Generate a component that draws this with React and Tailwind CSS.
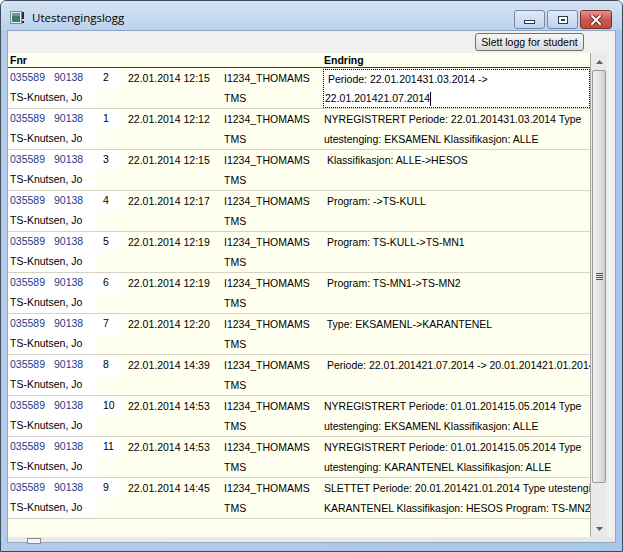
import React from 'react';

const rows = [
  { n: '2', t: '22.01.2014 12:15', e: [' Periode: 22.01.201431.03.2014 ->', '22.01.201421.07.2014'], focus: true },
  { n: '1', t: '22.01.2014 12:12', e: ['NYREGISTRERT Periode: 22.01.201431.03.2014 Type', 'utestenging: EKSAMENL Klassifikasjon: ALLE'] },
  { n: '3', t: '22.01.2014 12:15', e: [' Klassifikasjon: ALLE->HESOS'] },
  { n: '4', t: '22.01.2014 12:17', e: [' Program: ->TS-KULL'] },
  { n: '5', t: '22.01.2014 12:19', e: [' Program: TS-KULL->TS-MN1'] },
  { n: '6', t: '22.01.2014 12:19', e: [' Program: TS-MN1->TS-MN2'] },
  { n: '7', t: '22.01.2014 12:20', e: [' Type: EKSAMENL->KARANTENEL'] },
  { n: '8', t: '22.01.2014 14:39', e: [' Periode: 22.01.201421.07.2014 -> 20.01.201421.01.2014'] },
  { n: '10', t: '22.01.2014 14:53', e: ['NYREGISTRERT Periode: 01.01.201415.05.2014 Type', 'utestenging: EKSAMENL Klassifikasjon: ALLE'] },
  { n: '11', t: '22.01.2014 14:53', e: ['NYREGISTRERT Periode: 01.01.201415.05.2014 Type', 'utestenging: KARANTENEL Klassifikasjon: ALLE'] },
  { n: '9', t: '22.01.2014 14:45', e: ['SLETTET Periode: 20.01.201421.01.2014 Type utestenging:', 'KARANTENEL Klassifikasjon: HESOS Program: TS-MN2'] },
];

function AppIcon() {
  return (
    <svg width="15" height="13" viewBox="0 0 15 13">
      <rect x="0.5" y="0.5" width="11" height="12" fill="#e8eef4" stroke="#7d8a98" />
      <rect x="2" y="2" width="8" height="9" fill="#3f7a6e" />
      <rect x="2" y="2" width="8" height="3" fill="#5fa38c" />
      <rect x="12" y="1" width="2" height="7" fill="#2b2b2b" />
      <rect x="12" y="10" width="2" height="2" fill="#2b2b2b" />
    </svg>
  );
}

function TitleButtons() {
  return (
    <div className="flex items-start gap-[2px] mt-[9px] mr-[10px]">
      <div className="w-[31px] h-[19px] rounded-[3px] border border-[#7189a8] bg-gradient-to-b from-[#e2ebf6] to-[#bfd2ea] flex items-end justify-center pb-[4px]">
        <div className="w-[11px] h-[4px] bg-white border border-[#2e3a4a]" />
      </div>
      <div className="w-[31px] h-[19px] rounded-[3px] border border-[#7189a8] bg-gradient-to-b from-[#e2ebf6] to-[#bfd2ea] flex items-center justify-center">
        <div className="w-[10px] h-[8px] bg-white border border-[#2e3a4a] flex items-center justify-center">
          <div className="w-[4px] h-[2px] bg-[#2e3a4a]" />
        </div>
      </div>
      <div className="w-[32px] h-[19px] rounded-[3px] border border-[#7a2e28] bg-gradient-to-b from-[#e3968f] via-[#c9574e] to-[#c24a40] flex items-center justify-center">
        <svg width="12" height="10" viewBox="0 0 12 10">
          <path d="M2 1 L10 9 M10 1 L2 9" stroke="#5a1a14" strokeWidth="3.6" strokeLinecap="square" />
          <path d="M2 1 L10 9 M10 1 L2 9" stroke="#ffffff" strokeWidth="2" strokeLinecap="square" />
        </svg>
      </div>
    </div>
  );
}

function Row({ r }) {
  return (
    <div className="flex h-[41px] border-b border-[#d6d2c4]">
      <div className="w-[113px] shrink-0 flex flex-col">
        <div className="h-[20px] bg-white flex items-center text-[#1f3a8a]">
          <span className="w-[46px] pl-[2px]">035589</span>
          <span className="w-[49px]">90138</span>
          <span className="text-black">{r.n}</span>
        </div>
        <div className="h-[20px] w-[89px] bg-white pl-[2px] flex items-center">TS-Knutsen, Jo</div>
      </div>
      <div className="w-[96px] shrink-0 pl-[7px] leading-[20px] whitespace-nowrap">{r.t}</div>
      <div className="w-[99px] shrink-0 pl-[7px] leading-[20px]">
        <div>I1234_THOMAMS</div>
        <div>TMS</div>
      </div>
      <div className="flex-1 min-w-0 overflow-hidden pl-[7px]">
        {r.focus ? (
          <div className="h-[39px] mt-[1px] bg-white border border-dotted border-black pl-px leading-[19px] whitespace-pre">
            <div>{r.e[0]}</div>
            <div className="flex items-center">
              <span>{r.e[1]}</span>
              <span className="w-px h-[14px] bg-black" />
            </div>
          </div>
        ) : (
          <div className="pl-[1px] leading-[20px] whitespace-pre">
            {r.e.map((l, i) => (
              <div key={i}>{l}</div>
            ))}
          </div>
        )}
      </div>
    </div>
  );
}

function VScroll() {
  return (
    <div className="w-[17px] shrink-0 flex flex-col bg-[#eaeaea] border-l border-[#a8a8a8]">
      <div className="h-[17px] flex items-center justify-center">
        <svg width="7" height="4" viewBox="0 0 7 4"><path d="M0 4 L3.5 0 L7 4 Z" fill="#606060" /></svg>
      </div>
      <div className="h-[413px] mx-[1px] rounded-[2px] border border-[#9a9a9a] bg-gradient-to-r from-[#f2f2f2] via-[#e4e4e4] to-[#cfcfcf] flex items-center justify-center">
        <div className="flex flex-col gap-[1px]">
          <div className="w-[7px] h-px bg-[#555]" />
          <div className="w-[7px] h-px bg-[#555]" />
          <div className="w-[7px] h-px bg-[#555]" />
          <div className="w-[7px] h-px bg-[#555]" />
        </div>
      </div>
      <div className="flex-1" />
      <div className="h-[17px] flex items-center justify-center">
        <svg width="7" height="4" viewBox="0 0 7 4"><path d="M0 0 L3.5 4 L7 0 Z" fill="#606060" /></svg>
      </div>
    </div>
  );
}

export default function App() {
  return (
    <div className="w-[623px] h-[552px] flex flex-col bg-[#b7cfea] border border-[#3d4b5c] rounded-t-[6px] overflow-hidden text-[10.5px] text-black" style={{ fontFamily: '"Liberation Sans", Arial, sans-serif' }}>
      {/* title bar */}
      <div className="h-[29px] shrink-0 flex justify-between bg-gradient-to-b from-[#d5e3f4] to-[#bcd2eb]">
        <div className="flex items-center gap-[7px] pl-[9px] pt-[4px]">
          <AppIcon />
          <span className="text-[11.5px] text-black" style={{ fontFamily: '"Open Sans", "Noto Sans", sans-serif' }}>Utestengingslogg</span>
        </div>
        <TitleButtons />
      </div>

      <div className="flex-1 flex px-[6px] pb-[8px] bg-gradient-to-r from-[#b4cce8] to-[#a9c7ec]">
        <div className="flex-1 flex flex-col bg-[#f0f0f0] border border-[#8fa8c6]">
          {/* toolbar */}
          <div className="h-[22px] shrink-0 flex justify-end items-start pr-[31px] pt-[2px]">
            <button className="h-[18px] w-[109px] rounded-[3px] border border-[#707070] bg-gradient-to-b from-[#f6f6f6] to-[#dcdcdc] leading-[16px] text-[10.5px]">
              Slett logg for student
            </button>
          </div>

          {/* grid */}
          <div className="flex-1 flex min-h-0">
            <div className="w-[582px] shrink-0 flex flex-col bg-[#fffff0] overflow-hidden">
              <div className="h-[15px] shrink-0 flex border-b border-[#3a3a3a] font-bold leading-[14px]">
                <span className="w-[308px] pl-[2px]">Fnr</span>
                <span className="pl-[8px]">Endring</span>
              </div>
              {rows.map((r, i) => (
                <Row key={i} r={r} />
              ))}
            </div>
            <VScroll />
            <div className="flex-1" />
          </div>

          {/* horizontal scroll remnant */}
          <div className="h-[5px] shrink-0 bg-[#e8e8e8] relative">
            <div className="absolute left-[19px] top-[1px] w-[14px] h-[6px] border border-[#8a8a8a] bg-[#f4f4f4]" />
          </div>
        </div>
      </div>
    </div>
  );
}
